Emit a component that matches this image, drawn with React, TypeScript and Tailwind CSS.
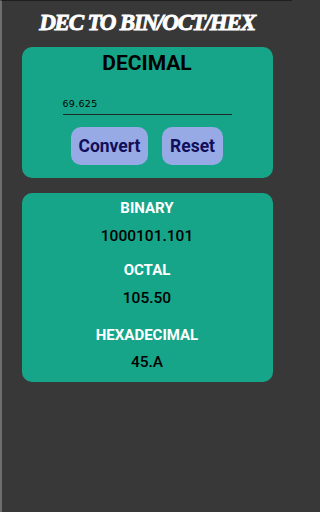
import React from 'react';

export default function App() {
  return (
    <div className="min-h-screen bg-[#383838]">
      <div className="w-[292px] h-[512px] bg-[#383838] border-l-2 border-l-[#6e6e6e] border-t border-t-[#1f1f1f] flex flex-col items-center overflow-hidden">
        {/* Title */}
        <h1 className="mt-[8px] text-white text-[23px] leading-[28px] font-black italic tracking-[-1.2px] [font-family:'Liberation_Serif',serif] [-webkit-text-stroke:0.9px_#fff]">
          DEC TO BIN/OCT/HEX
        </h1>

        {/* Input card */}
        <div className="mt-[10px] w-[251px] h-[131px] bg-[#17a589] rounded-[10px] flex flex-col items-center [font-family:Roboto,sans-serif]">
          <h2 className="mt-[3px] text-black text-[21px] leading-[26px] font-bold">DECIMAL</h2>
          <div className="mt-[22px] w-[169px] border-b-[1.5px] border-[#1f2a26] pb-[4px]">
            <span className="block text-black text-[9.5px] leading-[12px] tracking-[0.3px] [font-family:'DejaVu_Sans',sans-serif]">69.625</span>
          </div>
          <div className="mt-[12px] flex gap-[14px]">
            <button className="w-[77px] h-[38px] rounded-[10px] bg-[#97aae6] text-[#120f5a] text-[17.5px] font-bold">Convert</button>
            <button className="w-[61px] h-[38px] rounded-[10px] bg-[#97aae6] text-[#120f5a] text-[17.5px] font-bold">Reset</button>
          </div>
        </div>

        {/* Results card */}
        <div className="mt-[15px] w-[251px] h-[189px] bg-[#17a589] rounded-[10px] flex flex-col items-center [font-family:Roboto,sans-serif]">
          <div className="mt-[6px] text-white text-[15px] leading-[18px] font-bold">BINARY</div>
          <div className="mt-[9px] text-black text-[15.5px] leading-[20px] font-medium">1000101.101</div>
          <div className="mt-[15px] text-white text-[15px] leading-[18px] font-bold">OCTAL</div>
          <div className="mt-[9px] text-black text-[15.5px] leading-[20px] font-medium">105.50</div>
          <div className="mt-[18px] text-white text-[15px] leading-[18px] font-bold">HEXADECIMAL</div>
          <div className="mt-[8px] text-black text-[15.5px] leading-[20px] font-medium">45.A</div>
        </div>
      </div>
    </div>
  );
}
